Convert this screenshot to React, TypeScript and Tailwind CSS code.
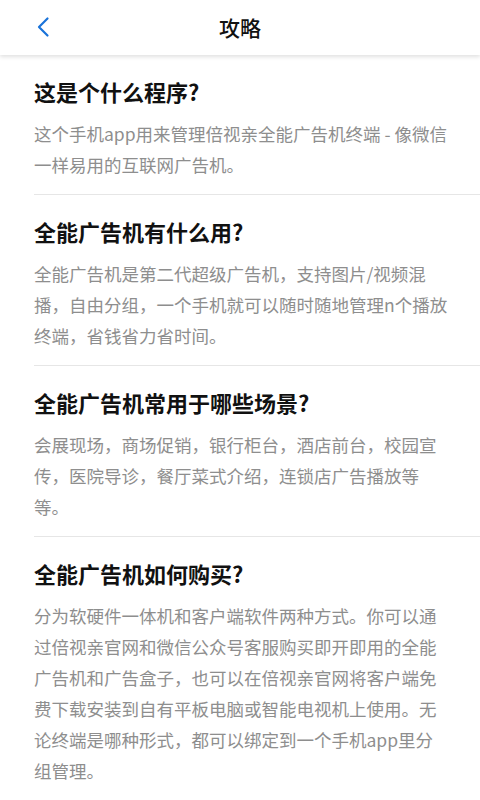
import React from "react";

const sections = [
  {
    title: "这是个什么程序?",
    lines: ["这个手机app用来管理倍视亲全能广告机终端 - 像微信", "一样易用的互联网广告机。"],
  },
  {
    title: "全能广告机有什么用?",
    lines: [
      "全能广告机是第二代超级广告机，支持图片/视频混",
      "播，自由分组，一个手机就可以随时随地管理n个播放",
      "终端，省钱省力省时间。",
    ],
  },
  {
    title: "全能广告机常用于哪些场景?",
    lines: [
      "会展现场，商场促销，银行柜台，酒店前台，校园宣",
      "传，医院导诊，餐厅菜式介绍，连锁店广告播放等",
      "等。",
    ],
  },
  {
    title: "全能广告机如何购买?",
    lines: [
      "分为软硬件一体机和客户端软件两种方式。你可以通",
      "过倍视亲官网和微信公众号客服购买即开即用的全能",
      "广告机和广告盒子，也可以在倍视亲官网将客户端免",
      "费下载安装到自有平板电脑或智能电视机上使用。无",
      "论终端是哪种形式，都可以绑定到一个手机app里分",
      "组管理。",
    ],
  },
];

export default function App() {
  return (
    <div
      className="w-[480px] h-[800px] overflow-hidden bg-white"
      style={{ fontFamily: '"Noto Sans CJK SC", "Noto Sans", sans-serif' }}
    >
      <header className="relative z-10 h-[55px] flex items-center justify-center bg-white shadow-[0_2px_4px_rgba(0,0,0,0.12)]">
        <button className="absolute left-[34px] top-[16px] w-[18px] h-[22px] flex items-center justify-center">
          <svg width="14" height="22" viewBox="0 0 14 22" fill="none">
            <path d="M11.5 2.5 L3 11 L11.5 19.5" stroke="#1a73d9" strokeWidth="2.2" strokeLinecap="round" strokeLinejoin="round" />
          </svg>
        </button>
        <h1 className="text-[21px] leading-[30px] text-[#111] font-medium -mt-[2px]">攻略</h1>
      </header>
      <main>
        {sections.map((s, i) => (
          <section key={i} className="ml-[34px]">
            <div className="pt-[21px] pb-[14px]">
              <h2 className="text-[22px] leading-[30px] font-bold text-[#111]">{s.title}</h2>
              <div className="mt-3 text-[17.5px] leading-[31px] text-[#8e8e8e]">
                {s.lines.map((l, j) => (
                  <p key={j} className="whitespace-nowrap">{l}</p>
                ))}
              </div>
            </div>
            {i < sections.length - 1 && <div className="h-px bg-[#e6e6e6]" />}
          </section>
        ))}
      </main>
    </div>
  );
}
